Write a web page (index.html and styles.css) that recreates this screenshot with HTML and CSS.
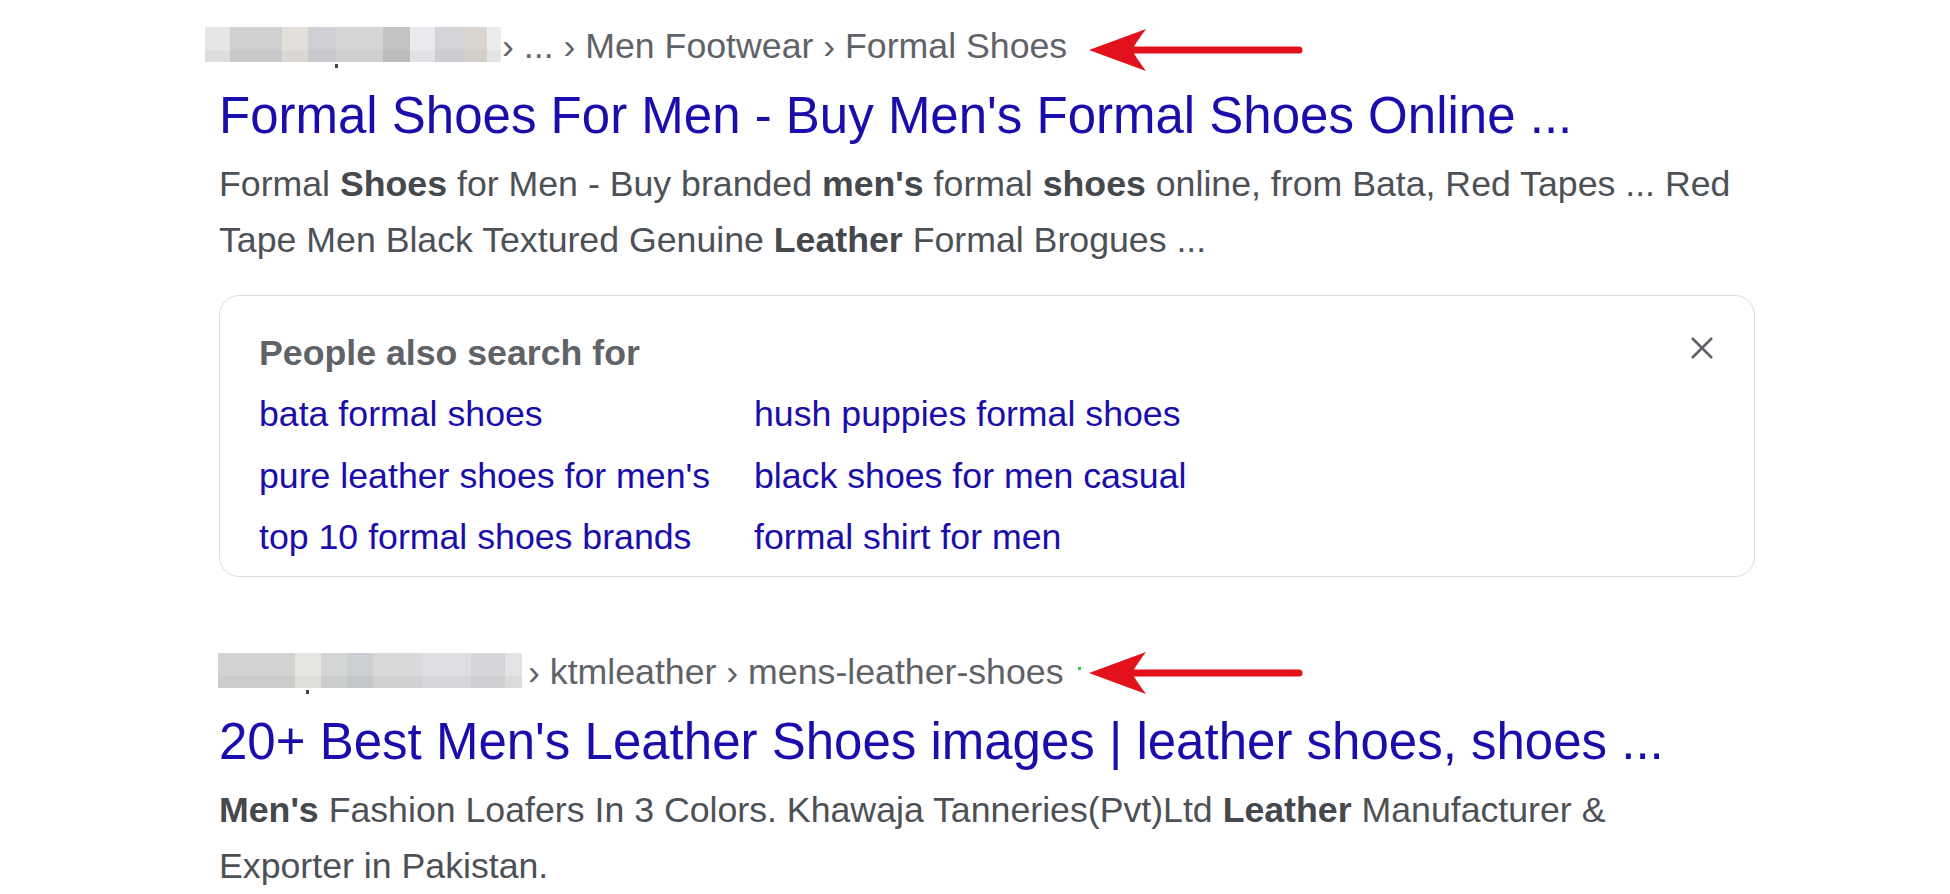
FILE: index.html
```html
<!DOCTYPE html>
<html lang="en">
<head>
<meta charset="utf-8">
<title>Search results</title>
<link rel="stylesheet" href="styles.css">
</head>
<body>
<div class="page">
  <div class="result">
    <div class="crumb crumb1">
      <span class="blur blur1">
        <i class="c c1"></i><i class="c c2"></i><i class="c c3"></i><i class="c c4"></i><i class="c c5"></i><i class="c c6"></i><i class="c c7"></i><i class="c c8"></i><i class="c c9"></i><i class="c c10"></i>
        <i class="speck speck1"></i>
      </span>
      <span class="path">› ... › Men Footwear › Formal Shoes</span>
      <svg class="arrow arrow1" width="216" height="44" viewBox="0 0 216 44"><path d="M1 22 L58 1 C52 9 48 15 46 18.5 L211 18.5 A3.5 3.5 0 0 1 211 25.5 L46 25.5 C48 29 52 35 58 43 Z" fill="#e3111b"/></svg>
    </div>
    <h3 class="title">Formal Shoes For Men - Buy Men's Formal Shoes Online ...</h3>
    <div class="snippet">Formal <b>Shoes</b> for Men - Buy branded <b>men's</b> formal <b>shoes</b> online, from Bata, Red Tapes ... Red Tape Men Black Textured Genuine <b>Leather</b> Formal Brogues ...</div>
  </div>

  <div class="pasf">
    <div class="pasf-head">
      <span class="pasf-title">People also search for</span>
      <svg class="close" width="24" height="24" viewBox="0 0 24 24"><path d="M2 2 L22 22 M22 2 L2 22" stroke="#5f6368" stroke-width="2.6" fill="none"/></svg>
    </div>
    <div class="pasf-grid">
      <a href="#">bata formal shoes</a>
      <a href="#">hush puppies formal shoes</a>
      <a href="#">pure leather shoes for men's</a>
      <a href="#">black shoes for men casual</a>
      <a href="#">top 10 formal shoes brands</a>
      <a href="#">formal shirt for men</a>
    </div>
  </div>

  <div class="result result2">
    <div class="crumb crumb2">
      <span class="blur blur2">
        <i class="c d1"></i><i class="c d2"></i><i class="c d3"></i><i class="c d4"></i><i class="c d5"></i><i class="c d6"></i><i class="c d7"></i><i class="c d8"></i>
        <i class="speck speck2"></i>
      </span>
      <span class="path">› ktmleather › mens-leather-shoes</span>
      <span class="gdot"></span>
      <svg class="arrow arrow2" width="216" height="44" viewBox="0 0 216 44"><path d="M1 22 L58 1 C52 9 48 15 46 18.5 L211 18.5 A3.5 3.5 0 0 1 211 25.5 L46 25.5 C48 29 52 35 58 43 Z" fill="#e3111b"/></svg>
    </div>
    <h3 class="title">20+ Best Men's Leather Shoes images | leather shoes, shoes ...</h3>
    <div class="snippet"><b>Men's</b> Fashion Loafers In 3 Colors. Khawaja Tanneries(Pvt)Ltd <b>Leather</b> Manufacturer &amp; Exporter in Pakistan.</div>
  </div>
</div>
</body>
</html>
```

FILE: styles.css
```css
html, body {
  margin: 0;
  background: #ffffff;
}

body {
  font-family: "Liberation Sans", Arial, sans-serif;
}

.page {
  padding: 23px 0 0 219px;
}

.crumb {
  display: flex;
  align-items: center;
  height: 46px;
  font-size: 35.7px;
  line-height: 46px;
  color: #5f6368;
  white-space: nowrap;
}

.blur {
  position: relative;
  display: flex;
  height: 35px;
  flex: none;
}

.blur1 {
  margin-left: -14px;
  margin-top: -3px;
}

.blur2 {
  margin-left: -1px;
  margin-top: -3px;
}

.c {
  display: block;
  height: 100%;
  background-image: linear-gradient(to bottom, rgba(255,255,255,0) 66%, rgba(0,0,0,0.035) 66%);
}

.c1 { width: 25px; background-color: #e6e6e6; }
.c2 { width: 52px; background-color: #d0d0d0; }
.c3 { width: 26px; background-color: #e3dfdb; }
.c4 { width: 28px; background-color: #cfcfd5; }
.c5 { width: 47px; background-color: #d6d6d6; }
.c6 { width: 27px; background-color: #c3c3c3; }
.c7 { width: 25px; background-color: #e8eaee; }
.c8 { width: 28px; background-color: #d2d4d8; }
.c9 { width: 24px; background-color: #dbd5cf; }
.c10 { width: 14px; background-color: #ececec; }

.d1 { width: 77px; background-color: #d3d3d3; }
.d2 { width: 26px; background-color: #e5e5e1; }
.d3 { width: 26px; background-color: #d2d5d3; }
.d4 { width: 26px; background-color: #cbcfd4; }
.d5 { width: 49px; background-color: #d9d9d9; }
.d6 { width: 49px; background-color: #dfdfe3; }
.d7 { width: 34px; background-color: #d6d6da; }
.d8 { width: 17px; background-color: #e3e3e3; }

.speck {
  position: absolute;
  width: 3px;
  height: 4px;
  background: #444;
  bottom: -6px;
}

.speck1 { left: 130px; }
.speck2 { left: 88px; }

.path {
  margin-left: 1px;
}

.crumb2 .path {
  margin-left: 6px;
}

.arrow {
  flex: none;
  display: block;
}

.arrow1 {
  margin-left: 21px;
  margin-top: 8px;
}

.gdot {
  width: 3px;
  height: 3px;
  background: #2fcf4a;
  margin-left: 14px;
  margin-top: -8px;
  flex: none;
}

.arrow2 {
  margin-left: 7px;
  margin-top: 2px;
}

.title {
  margin: 14px 0 0;
  font-size: 51px;
  line-height: 66px;
  font-weight: normal;
  color: #1a0dab;
  white-space: nowrap;
}

.snippet {
  margin-top: 7px;
  width: 1524px;
  font-size: 35.7px;
  line-height: 56px;
  color: #4d5156;
}

.snippet b {
  color: #45484c;
}

.pasf {
  margin-top: 27px;
  width: 1536px;
  box-sizing: border-box;
  border: 1px solid #dadce0;
  border-radius: 20px;
  padding: 34px 39px 16px 39px;
}

.pasf-head {
  display: flex;
  justify-content: space-between;
  align-items: center;
  height: 46px;
}

.pasf-title {
  font-size: 35.7px;
  line-height: 46px;
  font-weight: bold;
  color: #5f6368;
}

.close {
  display: block;
  margin-top: -10px;
  margin-right: 1px;
}

.pasf-grid {
  display: grid;
  grid-template-columns: 495px auto;
  row-gap: 15.5px;
  margin-top: 15px;
  font-size: 35.7px;
  line-height: 46px;
}

.pasf-grid a {
  color: #1a0dab;
  text-decoration: none;
  white-space: nowrap;
}

.result2 {
  margin-top: 72px;
}
```
